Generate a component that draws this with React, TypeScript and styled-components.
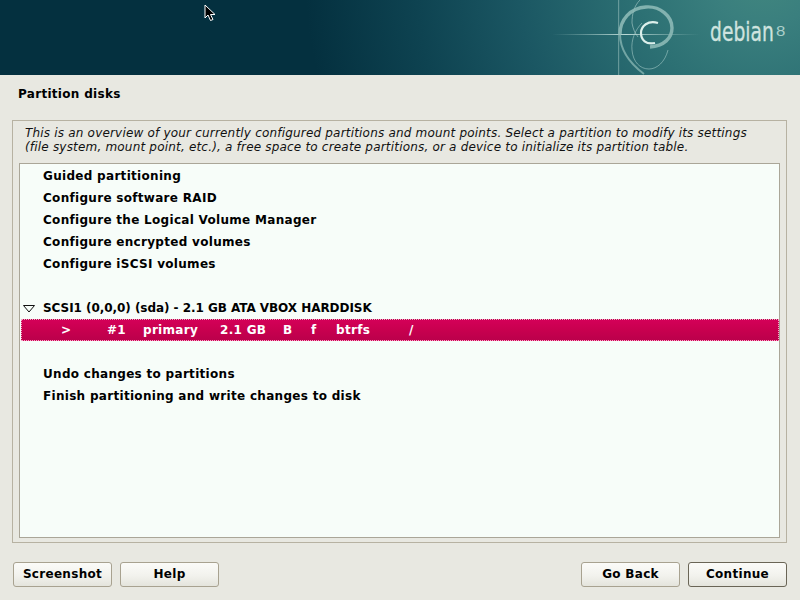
import React from "react";
import styled, { createGlobalStyle } from "styled-components";

const GlobalStyle = createGlobalStyle`
  html, body {
    margin: 0;
    padding: 0;
    overflow: hidden;
  }
  body {
    background: #e8e8e1;
    font-family: "DejaVu Sans", sans-serif;
    font-size: 12px;
    color: #000;
  }
`;

const Page = styled.div`
  width: 800px;
  height: 600px;
  display: flex;
  flex-direction: column;
`;

const Banner = styled.header`
  position: relative;
  height: 75px;
  flex: none;
  overflow: hidden;
  background: radial-gradient(circle 460px at 765px -30px, #42887f 0%, #3a7f7e 12%, #2d7174 28%, #1b5763 54%, #0e4351 76%, #04303f 100%);
`;

const Wordmark = styled.div`
  position: absolute;
  top: 17px;
  left: 710px;
  display: flex;
  align-items: flex-start;
  color: #cfe3df;
`;

const WordmarkName = styled.span`
  display: inline-block;
  width: 66px;
  font-family: "DejaVu Sans Condensed", "DejaVu Sans", sans-serif;
  font-size: 26px;
  line-height: 30px;
  -webkit-text-stroke: 0.3px #cfe3df;
  transform: scaleX(0.8);
  transform-origin: left center;
`;

const WordmarkVersion = styled.span`
  font-family: "Liberation Sans", sans-serif;
  font-size: 14px;
  line-height: 28px;
  transform: scaleX(1.2);
  transform-origin: left center;
  color: #a9cfca;
`;

const Cursor = styled.svg`
  position: absolute;
  top: 4px;
  left: 204px;
`;

const Swirl = styled.svg`
  position: absolute;
  top: 0;
  left: 540px;
`;

const Title = styled.h1`
  margin: 0;
  padding: 12px 0 0 18px;
  height: 45px;
  box-sizing: border-box;
  font-size: 12px;
  line-height: 15px;
  font-weight: bold;
  letter-spacing: 0.3px;
  flex: none;
`;

const Frame = styled.main`
  margin: 0 13px 0 12px;
  height: 423px;
  box-sizing: border-box;
  border: 1px solid #b7b2a2;
  padding: 5px 6px 4px 6px;
  display: flex;
  flex-direction: column;
  flex: none;
`;

const Intro = styled.p`
  margin: 0 0 9px 6px;
  font-style: italic;
  font-size: 12px;
  line-height: 14px;
  letter-spacing: 0.19px;
  white-space: nowrap;
  color: #111;
`;

const List = styled.div`
  flex: 1;
  border: 1px solid #aaa698;
  background: #f7fdf9;
  padding: 1px 0 0 1px;
`;

const Row = styled.div<{ $spacing?: number }>`
  height: 22px;
  line-height: 22px;
  padding-left: 22px;
  font-weight: bold;
  font-size: 12px;
  letter-spacing: ${(p) => p.$spacing ?? 0.3}px;
  white-space: pre;
  position: relative;
`;

const Expander = styled.svg`
  position: absolute;
  left: 2px;
  top: 8px;
`;

const SelectedRow = styled.div`
  height: 22px;
  box-sizing: border-box;
  line-height: 20px;
  display: grid;
  grid-template-columns: 46px 36px 77px 63px 28px 25px 73px 20px;
  padding-left: 39px;
  background: linear-gradient(180deg, #d40058 0%, #c8004f 50%, #bb004b 100%);
  border: 1px dotted #f4a9c6;
  color: #fff;
  font-weight: bold;
  font-size: 12px;
  letter-spacing: 0.3px;
`;

const Footer = styled.footer`
  flex: 1;
  display: flex;
  align-items: flex-start;
  gap: 8px;
  padding: 19px 13px 0 13px;
`;

const Spacer = styled.div`
  flex: 1;
`;

const Button = styled.button<{ $focused?: boolean }>`
  width: 99px;
  height: 25px;
  padding: 0 0 2px;
  box-sizing: border-box;
  border: 1px solid ${(p) => (p.$focused ? "#6a6556" : "#a8a290")};
  border-radius: 3px;
  background: linear-gradient(180deg, #fbfbf8 0%, #f2f2ed 55%, #e4e4dc 100%);
  font-family: "DejaVu Sans", sans-serif;
  font-size: 12px;
  font-weight: bold;
  letter-spacing: 0.3px;
  color: #000;
`;

const menuItems = [
  "Guided partitioning",
  "Configure software RAID",
  "Configure the Logical Volume Manager",
  "Configure encrypted volumes",
  "Configure iSCSI volumes",
  "",
];

const partitionCells = [">", "#1", "primary", "2.1 GB", "B", "f", "btrfs", "/"];

export default function App() {
  return (
    <Page>
      <GlobalStyle />
      <Banner>
        <Swirl width="200" height="75" viewBox="540 0 200 75" fill="none">
          <defs>
            <linearGradient id="beam" x1="0" x2="1" y1="0" y2="0">
              <stop offset="0" stopColor="#9cc4c0" stopOpacity="0" />
              <stop offset="0.5" stopColor="#c4e0dc" stopOpacity="0.95" />
              <stop offset="1" stopColor="#9cc4c0" stopOpacity="0" />
            </linearGradient>
          </defs>
          <rect x="552" y="34" width="148" height="1" fill="url(#beam)" />
          <rect x="618" y="0" width="1.2" height="75" fill="#8fb8b6" opacity="0.6" />
          {/* thin arcs */}
          <path d="M640 0C634 6 632 14 632 23C633 29 635 33 638 37" stroke="#b8d6d2" strokeWidth="0.8" opacity="0.7" />
          <path d="M642 23C635 30 631 40 632 50C633 62 640 69 649 69C657 69 665 62 668 50" stroke="#a9cfcb" strokeWidth="0.8" opacity="0.7" />
          {/* heavy outer spiral */}
          <path d="M620 34C620 20 630 8 646 7C660 6 672 16 672 28C672 38 664 46 650 47" stroke="#8cb9b6" strokeWidth="3.4" opacity="0.9" />
          <path d="M620 34C620 48 628 62 644 74" stroke="#8cb9b6" strokeWidth="2" opacity="0.75" />
          {/* bright inner curl */}
          <path d="M658 23C648 20 641 26 641 33C641 40 646 45 655 43" stroke="#dcefeb" strokeWidth="2.2" />
        </Swirl>
        <Wordmark>
          <WordmarkName>debian</WordmarkName>
          <WordmarkVersion>8</WordmarkVersion>
        </Wordmark>
        <Cursor width="12" height="18" viewBox="0 0 12 18">
          <path d="M1 1V14L4 11L6.5 16.5L9 15.5L6.5 10.5H11Z" fill="#000" stroke="#fff" strokeWidth="1" />
        </Cursor>
      </Banner>
      <Title>Partition disks</Title>
      <Frame>
        <Intro>
          This is an overview of your currently configured partitions and mount points. Select a partition to modify its settings
          <br />
          (file system, mount point, etc.), a free space to create partitions, or a device to initialize its partition table.
        </Intro>
        <List>
          {menuItems.map((item, i) => (
            <Row key={i}>{item}</Row>
          ))}
          <Row $spacing={-0.05}>
            <Expander width="12" height="8" viewBox="0 0 12 8" fill="none">
              <path d="M0.5 0.5H11.5L6 7Z" stroke="#111" strokeWidth="1" />
            </Expander>
            SCSI1 (0,0,0) (sda) - 2.1 GB ATA VBOX HARDDISK
          </Row>
          <SelectedRow>
            {partitionCells.map((cell) => (
              <span key={cell}>{cell}</span>
            ))}
          </SelectedRow>
          <Row />
          <Row>Undo changes to partitions</Row>
          <Row>Finish partitioning and write changes to disk</Row>
        </List>
      </Frame>
      <Footer>
        <Button>Screenshot</Button>
        <Button>Help</Button>
        <Spacer />
        <Button>Go Back</Button>
        <Button $focused>Continue</Button>
      </Footer>
    </Page>
  );
}
